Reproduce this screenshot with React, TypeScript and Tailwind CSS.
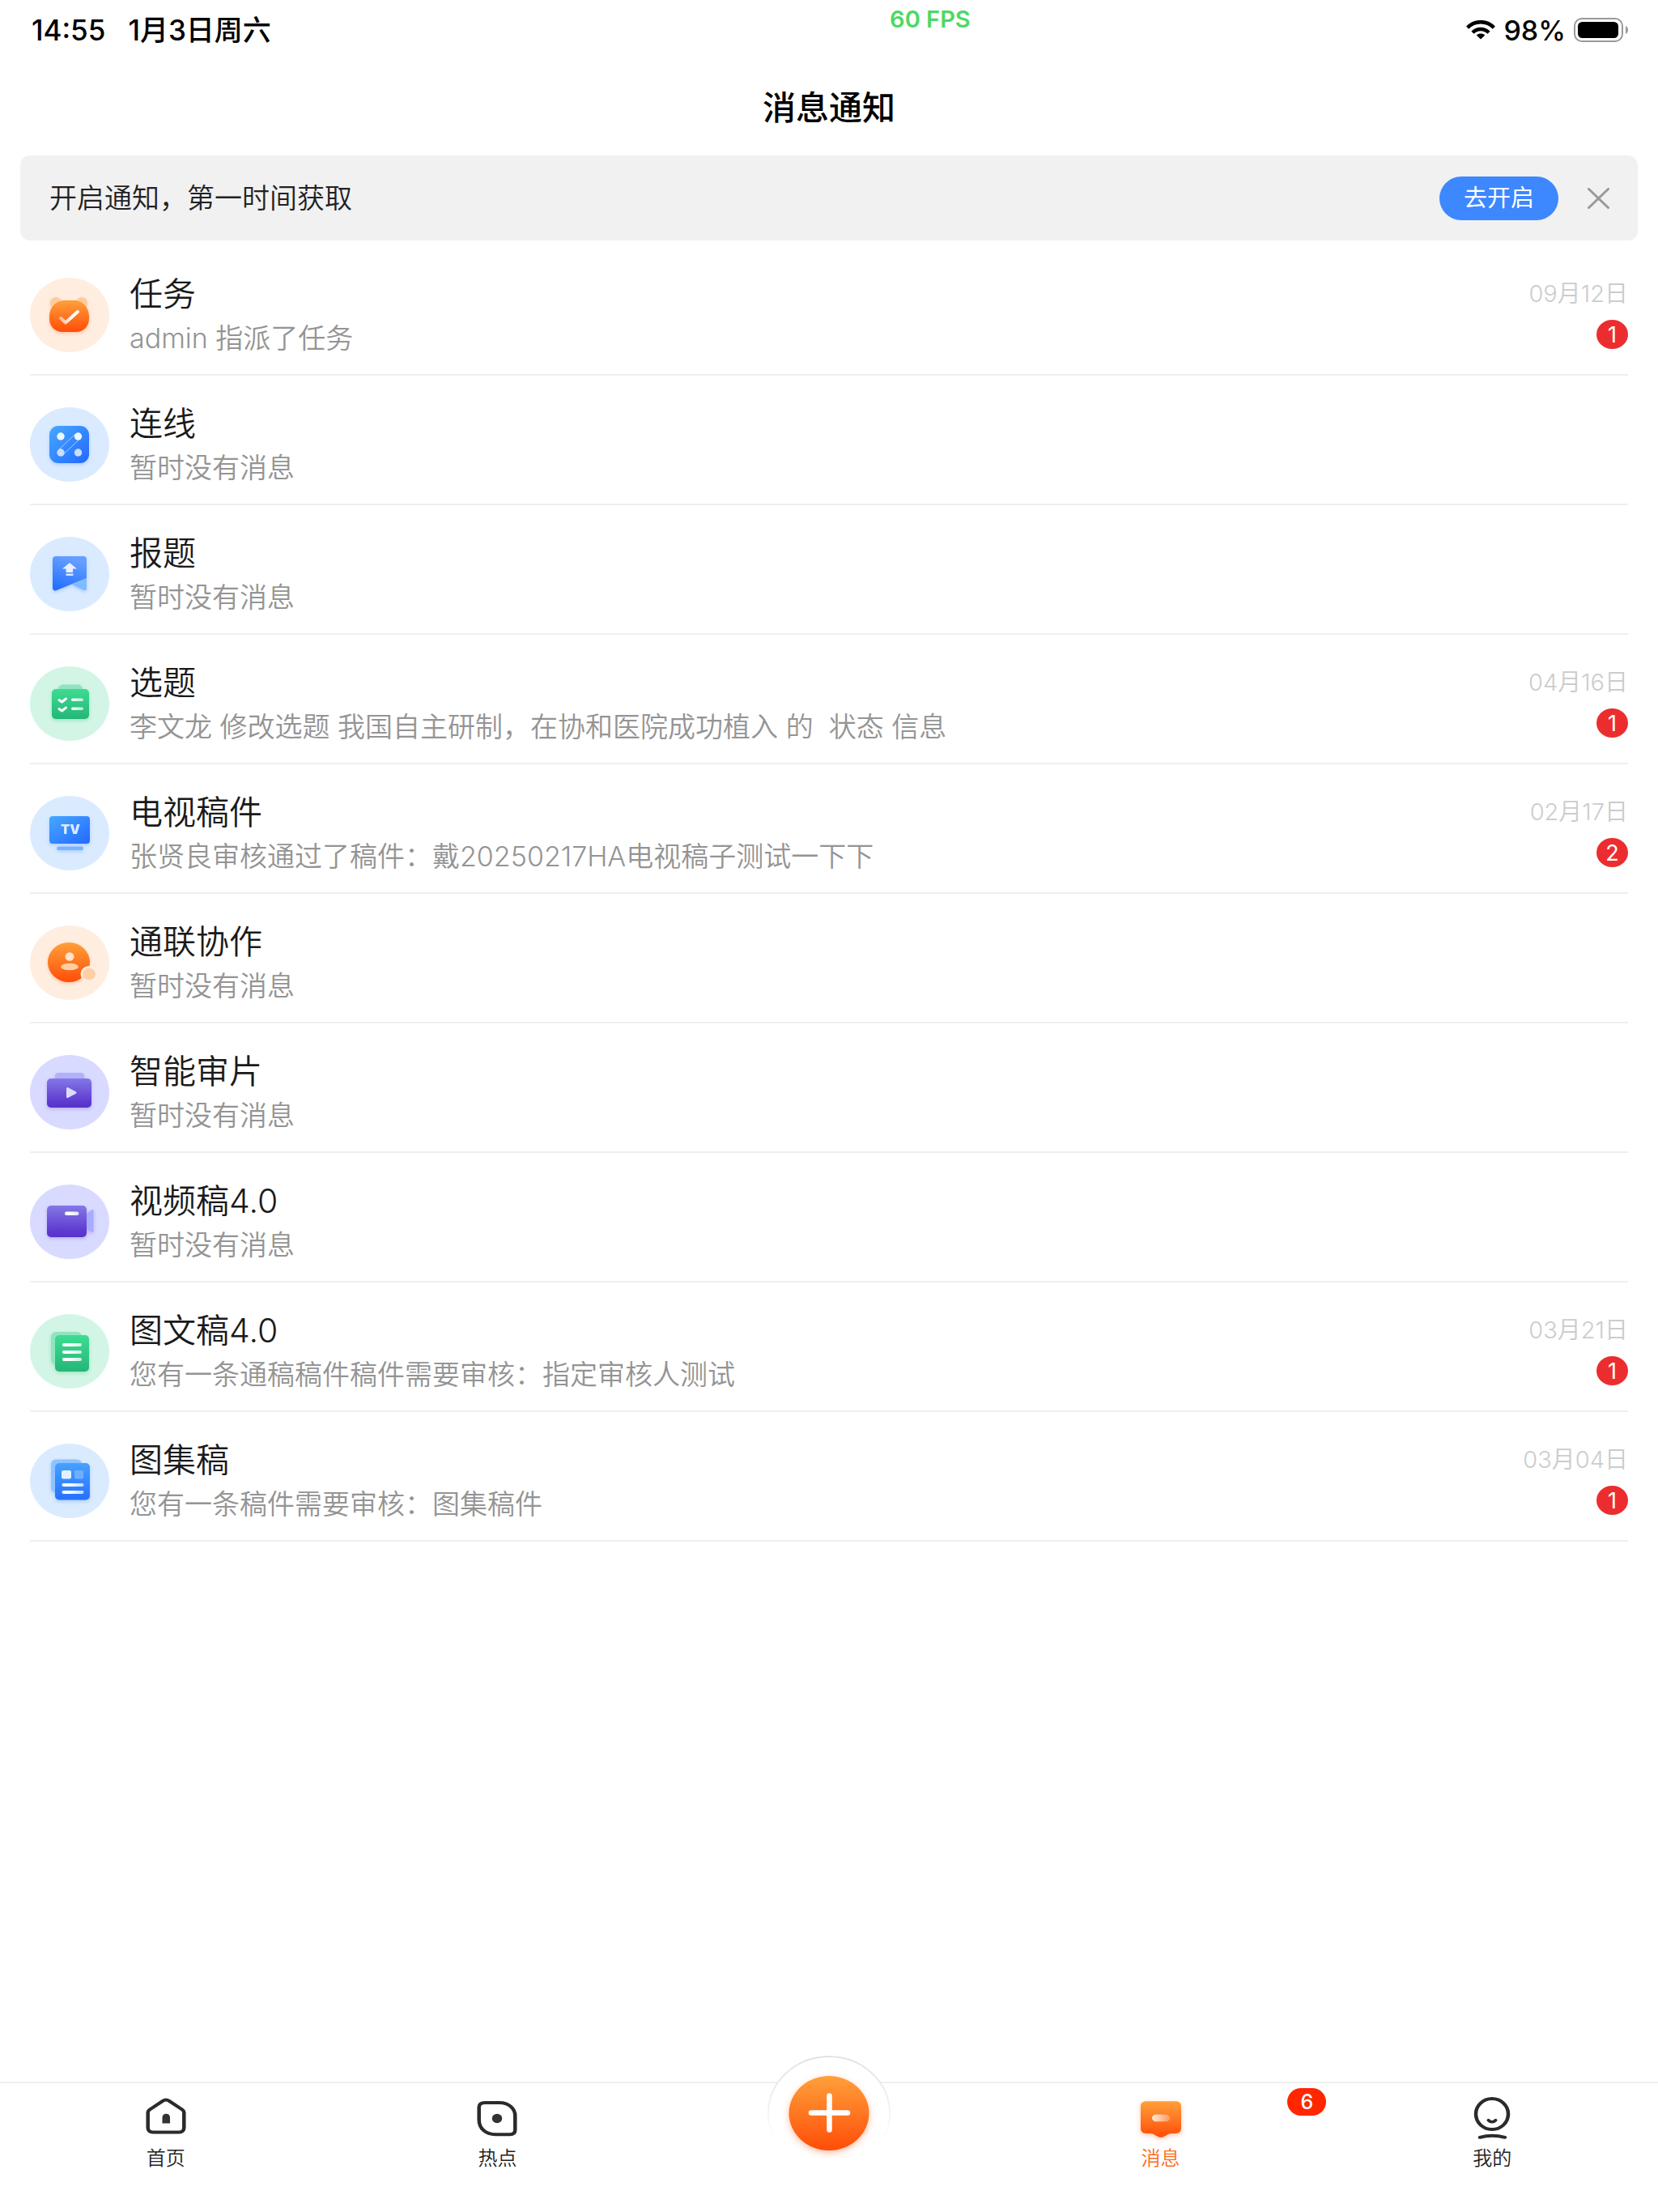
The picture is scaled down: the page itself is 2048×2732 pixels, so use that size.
import React from 'react';

type IconProps = { bg: string; shadow: string; children: React.ReactNode; overlay?: React.ReactNode };

const RoundIcon: React.FC<IconProps> = ({ bg, shadow, children, overlay }) => (
  <svg viewBox="0 0 98 92" className="w-[98px] h-[92px] shrink-0" aria-hidden="true">
    <ellipse cx="49" cy="46" rx="49" ry="46" fill={bg} />
    <g className={shadow}>{children}</g>
    {overlay}
  </svg>
);

const ORANGE = 'drop-shadow-[0_2px_2px_rgba(255,80,10,0.25)]';
const BLUE = 'drop-shadow-[0_2px_2px_rgba(40,110,255,0.25)]';
const GREEN = 'drop-shadow-[0_2px_2px_rgba(30,190,120,0.3)]';
const PURPLE = 'drop-shadow-[0_2px_2px_rgba(90,50,200,0.25)]';

// Gradients shared by every icon on the page
const Gradients: React.FC = () => (
  <svg className="absolute w-0 h-0" aria-hidden="true">
    <defs>
      <linearGradient id="orange" x1="0" y1="0" x2="0" y2="1">
        <stop offset="0" stopColor="#ffa03a" />
        <stop offset="1" stopColor="#ff4d08" />
      </linearGradient>
      <linearGradient id="blue" x1="0" y1="0" x2="1" y2="1">
        <stop offset="0" stopColor="#46a8ff" />
        <stop offset="1" stopColor="#2469ff" />
      </linearGradient>
      <linearGradient id="blueFlag" x1="0.3" y1="0" x2="0" y2="1">
        <stop offset="0" stopColor="#659eff" />
        <stop offset="1" stopColor="#1c6bff" />
      </linearGradient>
      <linearGradient id="blueDown" x1="0" y1="0" x2="0" y2="1">
        <stop offset="0" stopColor="#45a2ff" />
        <stop offset="1" stopColor="#2670ff" />
      </linearGradient>
      <linearGradient id="green" x1="0" y1="0" x2="0" y2="1">
        <stop offset="0" stopColor="#3ddc91" />
        <stop offset="1" stopColor="#24b678" />
      </linearGradient>
      <linearGradient id="purple" x1="0" y1="0" x2="0" y2="1">
        <stop offset="0" stopColor="#8478e6" />
        <stop offset="0.8" stopColor="#5e3ad0" />
        <stop offset="1" stopColor="#5831cd" />
      </linearGradient>
      <linearGradient id="fade" gradientUnits="userSpaceOnUse" x1="36" y1="0" x2="66" y2="0">
        <stop offset="0" stopColor="#fff" />
        <stop offset="0.4" stopColor="#fff" />
        <stop offset="1" stopColor="#fff" stopOpacity="0.7" />
      </linearGradient>
      <linearGradient id="tick" gradientUnits="userSpaceOnUse" x1="37" y1="52" x2="50" y2="48">
        <stop offset="0" stopColor="#fff" stopOpacity="0.5" />
        <stop offset="1" stopColor="#fff" />
      </linearGradient>
      <linearGradient id="pill" x1="0" y1="0" x2="1" y2="0">
        <stop offset="0" stopColor="#fff" stopOpacity="0.85" />
        <stop offset="1" stopColor="#fff" stopOpacity="0.25" />
      </linearGradient>
      <linearGradient id="halo" x1="0" y1="0" x2="0" y2="1">
        <stop offset="0" stopColor="#e2e2e2" />
        <stop offset="0.5" stopColor="#f4f4f4" />
        <stop offset="0.75" stopColor="#fff" />
      </linearGradient>
    </defs>
  </svg>
);

const TaskIcon = () => (
  <RoundIcon bg="#ffeee0" shadow={ORANGE}>
    <circle cx="32" cy="31" r="7" fill="#ffcb9e" />
    <circle cx="64" cy="31" r="7" fill="#ffcb9e" />
    <path d="M43 28h12c10 0 18 9 18 20v3c0 9-7 16-16 16H40c-9 0-16-7-16-16v-3c0-11 8-20 19-20z" fill="url(#orange)" />
    <path d="M38 50l6 5.500 15-13.500" fill="none" stroke="url(#tick)" strokeWidth="4" strokeLinejoin="round" strokeLinecap="round" />
  </RoundIcon>
);

const LinkIcon = () => (
  <RoundIcon bg="#daebff" shadow={BLUE}>
    <rect x="24" y="23" width="49" height="46" rx="11" fill="url(#blue)" />
    <path d="M35.500 52.500L56 33M41 58.500L61.500 39" stroke="#a9cdff" strokeWidth="1" />
    <circle cx="38" cy="36" r="4.700" fill="#f0f6ff" />
    <circle cx="59.500" cy="36" r="4.700" fill="#f0f6ff" />
    <circle cx="38" cy="56" r="4.700" fill="#c9defc" />
    <circle cx="59.500" cy="56" r="4.700" fill="#c9defc" />
  </RoundIcon>
);

const FlagIcon = () => (
  <RoundIcon bg="#daebff" shadow={BLUE}>
    <path d="M52 59l18-8v12.500c0 2-2 3.200-4 2.300z" fill="#7fbbff" />
    <path d="M32 24h34c2.500 0 4 1.500 4 4v23L33 66c-2.500 1-5 0-5-3V28c0-2.500 1.500-4 4-4z" fill="url(#blueFlag)" />
    <path d="M49 32l9 7.500h-5V44h-8.500v-4.500H40z" fill="#e6f0ff" />
    <rect x="44.500" y="45.500" width="9" height="2.500" fill="#d8e7ff" />
  </RoundIcon>
);

const TopicIcon = () => (
  <RoundIcon bg="#d3f5e6" shadow={GREEN}>
    <path d="M35 30v-2c0-3 2.500-5.500 6-5.500h18c3.500 0 6 2.500 6 5.500v2z" fill="#92e3c0" />
    <rect x="27" y="28" width="46" height="37" rx="5" fill="url(#green)" />
    <g fill="none" stroke="url(#fade)" strokeWidth="3" strokeLinecap="round" strokeLinejoin="round">
      <path d="M36 41.500l3.500 2.500 5-4M36 52.500l3.500 2.500 5-4" />
    </g>
    <rect x="51" y="39.500" width="15" height="3.500" rx="1.700" fill="url(#fade)" />
    <rect x="51" y="50.500" width="15" height="3.500" rx="1.700" fill="url(#fade)" />
  </RoundIcon>
);

const TvIcon = () => (
  <RoundIcon bg="#daebff" shadow={BLUE}>
    <rect x="24" y="25" width="50" height="34" rx="4" fill="url(#blue)" />
    <rect x="33" y="62.500" width="33" height="4.500" rx="2.200" fill="#76b4ff" />
    <text x="50" y="47" textAnchor="middle" className="font-[Inter] text-[16px] font-black fill-[#dcebff]">TV</text>
  </RoundIcon>
);

const PeopleIcon = () => (
  <RoundIcon
    bg="#ffeee0"
    shadow={ORANGE}
    overlay={
      <>
        <ellipse cx="73" cy="60" rx="10.500" ry="10" fill="#ffeee0" />
        <ellipse cx="73" cy="60" rx="8" ry="7.300" fill="#ffcfa8" />
      </>
    }
  >
    <ellipse cx="48" cy="45.500" rx="26" ry="24.500" fill="url(#orange)" />
    <ellipse cx="49" cy="38.500" rx="5.500" ry="5.200" fill="#ffe3cc" />
    <ellipse cx="49" cy="51" rx="11" ry="4.300" fill="#ffcf9f" />
  </RoundIcon>
);

const ReviewIcon = () => (
  <RoundIcon bg="#d9daff" shadow={PURPLE}>
    <path d="M31 30v-4c0-2.500 1.500-4 4-4h28c2.500 0 4 1.500 4 4v4z" fill="#b1b1fa" />
    <rect x="21" y="29" width="55" height="36" rx="5" fill="url(#purple)" />
    <path d="M46.500 41.500l9.500 5-9.500 5z" fill="#dcdcfb" stroke="#dcdcfb" strokeWidth="3" strokeLinejoin="round" />
  </RoundIcon>
);

const VideoIcon = () => (
  <RoundIcon bg="#d9daff" shadow={PURPLE}>
    <path d="M70 36l6-4.500c1.200-.8 2.500-.5 2.500 1v25c0 1.500-1.300 1.800-2.500 1L70 55z" fill="#a9abff" />
    <rect x="21" y="26" width="49" height="39" rx="5" fill="url(#purple)" />
    <rect x="43" y="33.500" width="17.500" height="4.500" rx="2.200" fill="url(#fade)" />
  </RoundIcon>
);

const ArticleIcon = () => (
  <RoundIcon bg="#d3f5e6" shadow={GREEN}>
    <rect x="26" y="22" width="38" height="40" rx="6" fill="#92e3c0" />
    <rect x="31" y="26" width="42" height="45" rx="5" fill="url(#green)" />
    <rect x="40" y="36" width="24" height="4" rx="2" fill="url(#fade)" />
    <rect x="40" y="45" width="24" height="4" rx="2" fill="url(#fade)" />
    <rect x="40" y="54" width="24" height="4" rx="2" fill="url(#fade)" />
  </RoundIcon>
);

const GalleryIcon = () => (
  <RoundIcon bg="#daebff" shadow={BLUE}>
    <rect x="26" y="19.500" width="38" height="41" rx="6" fill="#8fc3ff" />
    <rect x="31" y="24" width="43" height="45.500" rx="5" fill="url(#blueDown)" />
    <rect x="39" y="33" width="12" height="10.500" rx="2" fill="#e6f0ff" />
    <rect x="55" y="33" width="11" height="10.500" rx="2" fill="#72aeff" />
    <rect x="39.500" y="49" width="27" height="4" rx="2" fill="url(#fade)" />
    <rect x="39.500" y="58" width="27" height="4" rx="2" fill="url(#fade)" />
  </RoundIcon>
);

interface Message {
  title: string;
  text: string;
  icon: React.FC;
  date?: string;
  count?: number;
}

const EMPTY = '暂时没有消息';

const messages: Message[] = [
  { title: '任务', text: 'admin 指派了任务', icon: TaskIcon, date: '09月12日', count: 1 },
  { title: '连线', text: EMPTY, icon: LinkIcon },
  { title: '报题', text: EMPTY, icon: FlagIcon },
  { title: '选题', text: '李文龙 修改选题 我国自主研制，在协和医院成功植入 的  状态 信息', icon: TopicIcon, date: '04月16日', count: 1 },
  { title: '电视稿件', text: '张贤良审核通过了稿件：戴20250217HA电视稿子测试一下下', icon: TvIcon, date: '02月17日', count: 2 },
  { title: '通联协作', text: EMPTY, icon: PeopleIcon },
  { title: '智能审片', text: EMPTY, icon: ReviewIcon },
  { title: '视频稿4.0', text: EMPTY, icon: VideoIcon },
  { title: '图文稿4.0', text: '您有一条通稿稿件稿件需要审核：指定审核人测试', icon: ArticleIcon, date: '03月21日', count: 1 },
  { title: '图集稿', text: '您有一条稿件需要审核：图集稿件', icon: GalleryIcon, date: '03月04日', count: 1 },
];

const StatusBar: React.FC = () => (
  <div className="relative flex h-[74px] items-center justify-between pl-[39px] pr-9 text-[34px] font-medium text-black">
    <div className="flex gap-7 text-[35px]">
      <span>14:55</span>
      <span>1月3日周六</span>
    </div>
    <span className="absolute left-[56.1%] top-2 -translate-x-1/2 text-[29px] leading-8 font-semibold text-[#4cd964]">60 FPS</span>
    <div className="flex items-center gap-[10px]">
      <svg viewBox="0 0 36 24" className="w-9 h-6" aria-hidden="true">
        <g fill="none" stroke="#000" strokeWidth="4.500">
          <path d="M1.700 9.200C10.500-.2 25.500-.2 34.300 9.200" />
          <path d="M8 15.200c5.500-5.700 14.500-5.700 20 0" />
        </g>
        <path d="M18 23.500l-5.200-5c2.800-2.600 7.600-2.600 10.400 0z" />
      </svg>
      <span>98%</span>
      <svg viewBox="0 0 68 30" className="w-[68px] h-[30px]" aria-hidden="true">
        <rect x="1" y="1" width="59" height="28" rx="9" fill="none" stroke="#999" strokeWidth="2" />
        <rect x="5" y="5" width="50" height="20" rx="5.500" />
        <path d="M64 10c4 1.500 4 8.500 0 10z" fill="#999" />
      </svg>
    </div>
  </div>
);

const Banner: React.FC = () => (
  <section className="mx-[25px] flex h-[105px] items-center rounded-xl bg-[#f1f1f1] pl-9 pr-[35px]">
    <p className="flex-1 text-[34px] font-[350] text-[#222]">开启通知，第一时间获取</p>
    <button className="h-[54px] w-[147px] rounded-full bg-[#3d87ff] text-[29px] leading-none text-white">去开启</button>
    <button aria-label="关闭" className="ml-9">
      <svg viewBox="0 0 27 26" className="w-[27px] h-[26px]" aria-hidden="true">
        <path d="M1.500 1.500l24 23M25.500 1.500l-24 23" stroke="#999" strokeWidth="3" strokeLinecap="round" />
      </svg>
    </button>
  </section>
);

const MessageRow: React.FC<{ item: Message }> = ({ item }) => {
  const Icon = item.icon;
  return (
    <li className="flex h-40 border-b-2 border-[#efefef]">
      <div className="pt-[39px]">
        <Icon />
      </div>
      <div className="ml-[25px] min-w-0 flex-1 pt-[30px]">
        <h2 className="text-[41px] leading-[58px] font-[350] text-[#1a1a1a]">{item.title}</h2>
        <p className="truncate whitespace-pre text-[34px] leading-[52px] font-[350] text-[#949494]">{item.text}</p>
      </div>
      {item.date && (
        <div className="flex flex-col items-end pt-[36px]">
          <time className="text-[29px] leading-[46px] font-[350] text-[#ccc]">{item.date}</time>
          <span className="mt-[9px] flex h-9 w-[39px] items-center justify-center rounded-[50%] bg-[#ec2d2f] text-[27px] leading-none text-white">
            {item.count}
          </span>
        </div>
      )}
    </li>
  );
};

// The tab glyphs are drawn on a square grid and shown a little wider than tall
const TabGlyph: React.FC<{ className?: string; children: React.ReactNode }> = ({ className = '', children }) => (
  <svg viewBox="0 0 60 60" preserveAspectRatio="none" className={`w-[60px] h-[53px] ${className}`} aria-hidden="true">
    {children}
  </svg>
);

const HomeTab = () => (
  <TabGlyph>
    <path d="M26 6.700c2.500-1.900 5.500-1.900 8 0l16 12c1.700 1.300 2.300 2.600 2.300 4.500v21c0 3.800-2.500 6.200-6.300 6.200H14c-3.800 0-6.300-2.400-6.300-6.200v-21c0-1.900.6-3.200 2.300-4.500z" fill="none" stroke="#2b2b2b" strokeWidth="4.500" />
    <path d="M25.500 38V29.500c0-6.500 9.500-6.500 9.500 0V38z" fill="#333" />
  </TabGlyph>
);

const HotTab = () => (
  <TabGlyph>
    <path d="M15 9h18c11 0 19.300 8 19.300 18.500V47c0 4-2 6.500-6.500 6.500H28C16 53.500 7.700 45 7.700 33V15.500C7.700 11 10.500 9 15 9z" fill="none" stroke="#2b2b2b" strokeWidth="4.500" />
    <ellipse cx="30" cy="31" rx="6.200" ry="6.500" fill="#333" />
  </TabGlyph>
);

const MessageTab = () => (
  <TabGlyph className="drop-shadow-[0_2px_3px_rgba(255,90,20,0.35)]">
    <path d="M12 7h36c4.500 0 7 2.500 7 7v31c0 4.500-2.500 7-7 7h-5c-5 0-8 5.500-13 5.500S22 52 17 52h-5c-4.500 0-7-2.500-7-7V14c0-4.500 2.500-7 7-7z" fill="url(#orange)" />
    <rect x="19" y="25.500" width="22" height="10" rx="5" fill="url(#pill)" />
  </TabGlyph>
);

const MineTab = () => (
  <TabGlyph>
    <g fill="none" stroke="#2b2b2b" strokeLinecap="round">
      <ellipse cx="30" cy="25" rx="20" ry="21.500" strokeWidth="4.500" />
      <path d="M25.500 33.500c2.500 3.300 6.500 3.300 9 0" strokeWidth="4" />
      <path d="M15 57.500c9.500-3 21-3 31 0" strokeWidth="4.500" />
    </g>
  </TabGlyph>
);

const TabLink: React.FC<{ label: string; icon: React.FC; active?: boolean; badge?: number }> = ({ label, icon: Icon, active, badge }) => (
  <a href="#" className={`relative flex flex-1 flex-col items-center pt-4 ${active ? 'text-[#ff6a1a]' : 'text-[#222]'}`}>
    <Icon />
    <span className="mt-[6px] text-2xl leading-9 font-[350]">{label}</span>
    {badge && (
      <span className="absolute right-0 top-[6px] flex h-[34px] w-12 items-center justify-center rounded-[17px] bg-[#ff2600] text-[25px] font-medium leading-none text-white">
        {badge}
      </span>
    )}
  </a>
);

const TabBar: React.FC = () => (
  <nav className="flex h-[161px] border-t-2 border-[#efefef]">
    <TabLink label="首页" icon={HomeTab} />
    <TabLink label="热点" icon={HotTab} />
    <div className="relative flex-1">
      <button aria-label="新建" className="absolute left-1/2 top-[-35px] -translate-x-1/2">
        <svg viewBox="0 0 152 144" className="w-[152px] h-[144px]">
          <ellipse cx="76" cy="72" rx="75" ry="70" fill="#fff" stroke="url(#halo)" strokeWidth="2" />
          <ellipse cx="76" cy="72" rx="49.500" ry="46" fill="url(#orange)" className="drop-shadow-[0_3px_4px_rgba(255,80,10,0.35)]" />
          <path d="M54 71.500h45M76.500 50.500v42" stroke="#fff" strokeWidth="6.500" strokeLinecap="round" />
        </svg>
      </button>
    </div>
    <TabLink label="消息" icon={MessageTab} active badge={6} />
    <TabLink label="我的" icon={MineTab} />
  </nav>
);

const App: React.FC = () => {
  return (
    <div className="flex min-h-screen flex-col bg-white font-[Inter,'Noto_Sans_CJK_SC',sans-serif]">
      <Gradients />
      <StatusBar />
      <header className="flex h-[118px] items-center justify-center">
        <h1 className="text-[41px] leading-[60px] font-medium text-black">消息通知</h1>
      </header>
      <Banner />
      <ul className="mx-[37px] mt-[7px]">
        {messages.map((item) => (
          <MessageRow key={item.title} item={item} />
        ))}
      </ul>
      <div className="flex-1" />
      <TabBar />
    </div>
  );
};

export default App;
